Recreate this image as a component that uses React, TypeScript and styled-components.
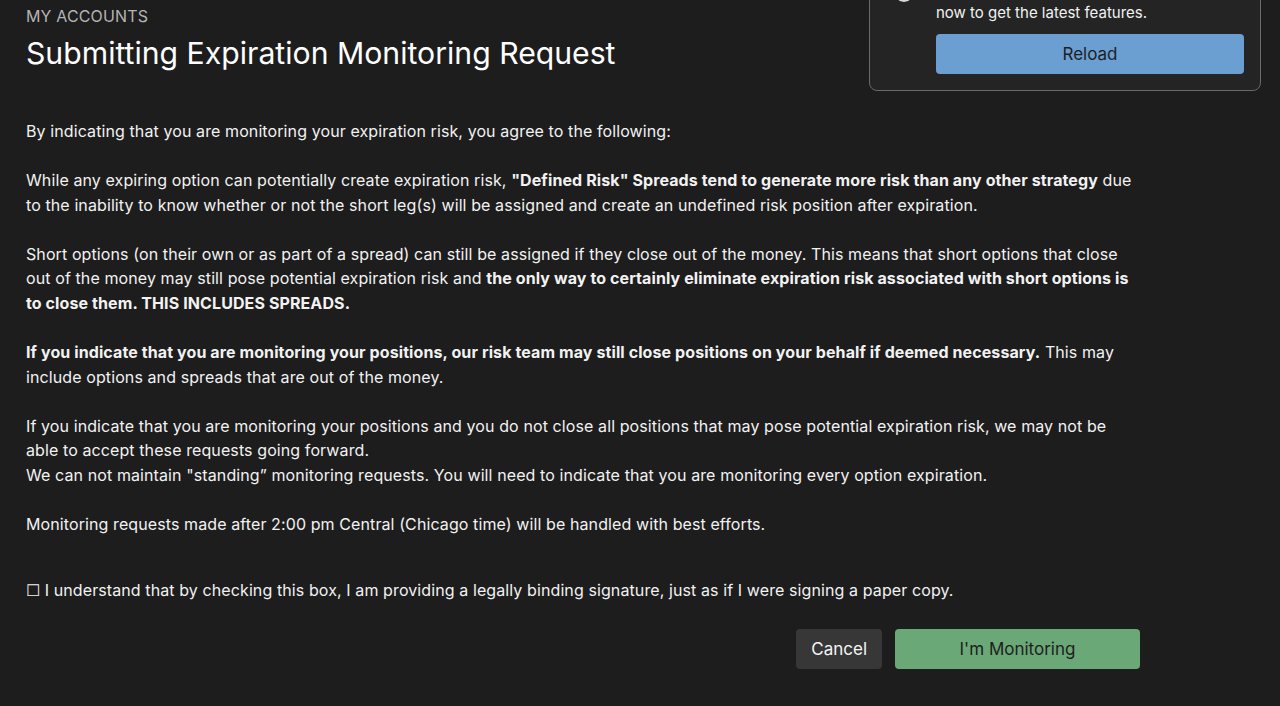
import React from 'react';
import styled, { createGlobalStyle } from 'styled-components';

const GlobalStyle = createGlobalStyle`
  html, body {
    margin: 0;
    padding: 0;
    background: #1d1d1d;
    color: #f2f2f2;
    font-family: Inter, 'Noto Sans', sans-serif;
  }
`;

const Page = styled.div`
  width: 1114px;
  padding: 4px 0 0 26px;
`;

const Eyebrow = styled.div`
  font-size: 16px;
  line-height: 24px;
  letter-spacing: 0.15px;
  color: #b4b4b4;
  text-transform: uppercase;
`;

const Title = styled.h1`
  margin: 5px 0 0;
  font-size: 30.2px;
  line-height: 40px;
  font-weight: 400;
  color: #ffffff;
`;

const Body = styled.div`
  margin-top: 46px;
  font-size: 16px;
  line-height: 24.56px;
  letter-spacing: 0.1px;
`;

const Paragraph = styled.p`
  margin: 0 0 24.56px;

  &:last-child {
    margin-bottom: 0;
  }

  b {
    font-weight: 700;
  }
`;

const Agreement = styled.label`
  display: block;
  margin-top: 42px;
  font-size: 16px;
  line-height: 24px;
  letter-spacing: 0.1px;
  cursor: pointer;
`;

const Actions = styled.div`
  display: flex;
  justify-content: flex-end;
  gap: 13px;
  margin-top: 27px;
`;

const Button = styled.button<{ variant: 'neutral' | 'confirm' | 'info' }>`
  height: 40px;
  border: none;
  border-radius: 4px;
  font-family: inherit;
  font-size: 17px;
  cursor: pointer;
  padding: 0 15px;
  background: ${p =>
    p.variant === 'confirm' ? '#6aa977' : p.variant === 'info' ? '#6b9fd2' : '#373737'};
  color: ${p => (p.variant === 'neutral' ? '#f5f5f5' : '#1e1e1e')};
`;

const ConfirmButton = styled(Button)`
  width: 245px;
`;

const Toast = styled.div`
  position: fixed;
  top: -37px;
  right: 19px;
  width: 392px;
  box-sizing: border-box;
  display: flex;
  gap: 22px;
  padding: 16px 16px 16px 24px;
  background: #242424;
  border: 1px solid #6a6a6a;
  border-radius: 8px;
`;

const ToastContent = styled.div`
  flex: 1;
  font-size: 15px;
  line-height: 22px;
  color: #f2f2f2;
`;

const ReloadButton = styled(Button)`
  display: block;
  width: 100%;
  margin-top: 10px;
`;

const InfoIcon = () => (
  <svg width="20" height="20" viewBox="0 0 20 20" style={{ flexShrink: 0, marginTop: 2 }}>
    <circle cx="10" cy="10" r="9" fill="none" stroke="#d8d8d8" strokeWidth="2" />
    <rect x="9" y="8.5" width="2" height="6" fill="#d8d8d8" />
    <circle cx="10" cy="6" r="1.2" fill="#d8d8d8" />
  </svg>
);

const App: React.FC = () => (
  <>
    <GlobalStyle />
    <Page>
      <Eyebrow>My Accounts</Eyebrow>
      <Title>Submitting Expiration Monitoring Request</Title>
      <Body>
        <Paragraph>
          By indicating that you are monitoring your expiration risk, you agree to the following:
        </Paragraph>
        <Paragraph>
          While any expiring option can potentially create expiration risk,{' '}
          <b>"Defined Risk" Spreads tend to generate more risk than any other strategy</b> due to
          the inability to know whether or not the short leg(s) will be assigned and create an
          undefined risk position after expiration.
        </Paragraph>
        <Paragraph>
          Short options (on their own or as part of a spread) can still be assigned if they close
          out of the money. This means that short options that close out of the money may still
          pose potential expiration risk and{' '}
          <b>
            the only way to certainly eliminate expiration risk associated with short options is to
            close them. THIS INCLUDES SPREADS.
          </b>
        </Paragraph>
        <Paragraph>
          <b>
            If you indicate that you are monitoring your positions, our risk team may still close
            positions on your behalf if deemed necessary.
          </b>{' '}
          This may include options and spreads that are out of the money.
        </Paragraph>
        <Paragraph>
          If you indicate that you are monitoring your positions and you do not close all positions
          that may pose potential expiration risk, we may not be able to accept these requests
          going forward.
          <br />
          We can not maintain "standing” monitoring requests. You will need to indicate that you
          are monitoring every option expiration.
        </Paragraph>
        <Paragraph>
          Monitoring requests made after 2:00 pm Central (Chicago time) will be handled with best
          efforts.
        </Paragraph>
      </Body>
      <Agreement>
        ☐ I understand that by checking this box, I am providing a legally binding signature, just
        as if I were signing a paper copy.
      </Agreement>
      <Actions>
        <Button variant="neutral">Cancel</Button>
        <ConfirmButton variant="confirm">I'm Monitoring</ConfirmButton>
      </Actions>
    </Page>
    <Toast>
      <InfoIcon />
      <ToastContent>
        A new version is available. Reload
        <br />
        now to get the latest features.
        <ReloadButton variant="info">Reload</ReloadButton>
      </ToastContent>
    </Toast>
  </>
);

export default App;
